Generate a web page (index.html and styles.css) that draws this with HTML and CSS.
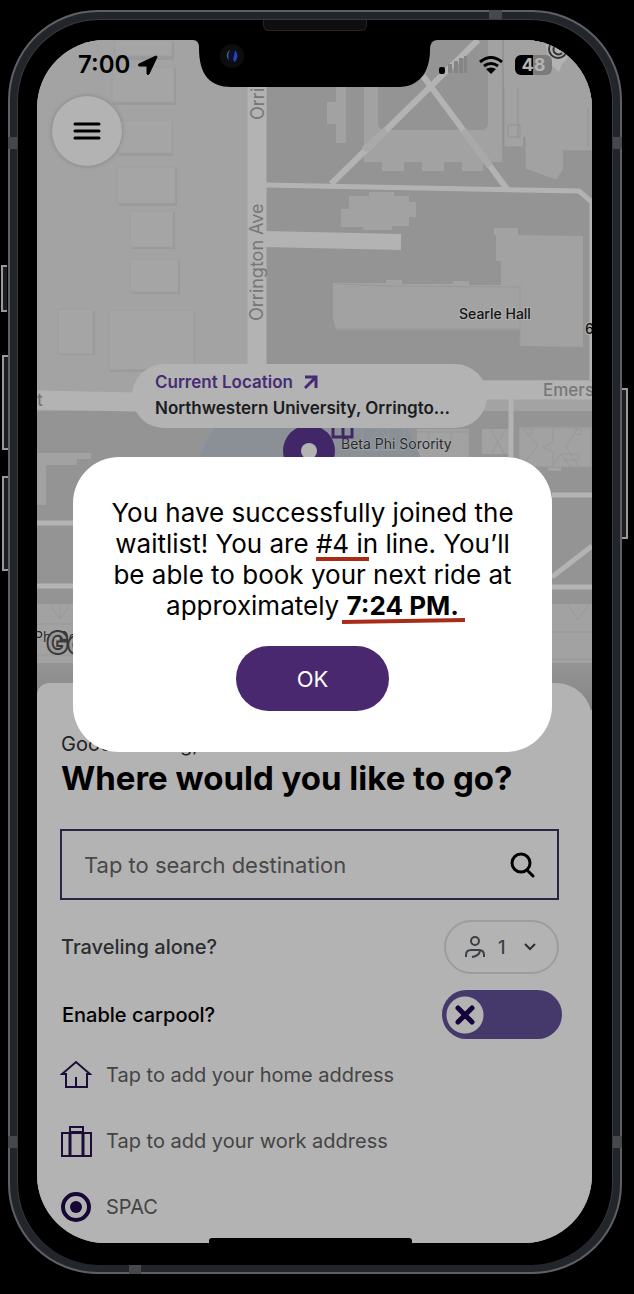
FILE: index.html
```html
<!DOCTYPE html>
<html lang="en">
<head>
<meta charset="utf-8">
<meta name="viewport" content="width=device-width, initial-scale=1">
<title>Waitlist confirmation</title>
<link rel="stylesheet" href="styles.css">
</head>
<body>
<div class="phone">
  <span class="side-key key-mute"></span>
  <span class="side-key key-up"></span>
  <span class="side-key key-down"></span>
  <span class="side-key key-power"></span>
  <span class="band band-left-top"></span>
  <span class="band band-right-top"></span>
  <span class="band band-left-bottom"></span>
  <span class="band band-right-bottom"></span>
  <span class="band band-top"></span>
  <span class="band band-bottom"></span>
  <div class="bezel">
    <span class="speaker"></span>
    <main class="screen">
      <svg class="map" viewBox="37 40 555 670" role="img" aria-label="Map around Orrington Avenue">
        <rect x="37" y="40" width="555" height="670" fill="#a3a3a3"/>
        <path d="M265 40H592V380H265ZM37 411H592V710H37Z" fill="#949494"/>
        <g fill="#9a9a9a">
          <path d="M115 42h59v18h-59zM113 68h63v37h-63zM119 121h54v35h-54zM119 168h58v38h-58zM132 212h43v37h-43zM132 260h48v34h-48zM59 311h36v44h-36zM110 312h85v60h-85z"/>
        </g>
        <g fill="#a5a5a5" stroke="#9e9e9e">
          <path d="M114 40h58v16h-58zM112 67h62v35h-62zM118 120h54v33h-54zM117 167h58v36h-58zM130 211h43v36h-43zM130 259h48v33h-48zM58 309h35v45h-35zM109 310h85v59l-85 1z"/>
        </g>
        <g fill="#a2a2a2">
          <path d="M347 87h17v75h18v9h22v-9h18v9h22v-9h18v9h21v-9h19V40H347zM346 87v56h-10v-19h-9v-22h9V87zM504 40h19v107h-19z"/>
          <path d="M518 40h74v111h-29v18l-7 11-31-11v-32h-7v-30h5V88h-5z"/>
          <path d="M349 196h20v-4h25v4h15v6h7v15h-7v9h-17v4h-29v-3h-22v-18h8z"/>
          <path d="M333 283h53v-3h16v4h51v-3h16v4h32v-24h-5v-26h-2v-7h24v7l65 1v111l-63-1v-16H336l-3-12z"/>
          <path d="M37 453h54v6H77v6H46v40H37z"/>
          <path d="M417 429h52v28h-52zM482 429h30v25h-30zM519 427h73v40h-31v4h-13v-4h-29zM37 604h555v59H37z"/>
        </g>
        <path d="M504 87v60h19M518 108v30M518 88v19M558 181l-33-12V137M508 125h12v12h-12zM588 147v-39M562 151h29" fill="none" stroke="#919191"/>
        <path d="M378 40h110v83q0 7-7 7h-96q-7 0-7-7z" fill="#949494"/>
        <path d="M520 285v62M336 329h184M337 284l53 2 130 1" fill="none" stroke="#989898"/>
        <g fill="none" stroke="#b3b3b3">
          <path d="M257 40V370" stroke-width="19"/>
          <path d="M37 400l150 3M480 390h112" stroke-width="19"/>
          <path d="M265 239l136 3" stroke-width="16"/>
          <path d="M265 185l314 6 13 11V380" stroke-width="5"/>
          <path d="M511 399v58M37 523h40M37 586h40M552 495h40M552 587h40M552 577l40-31" stroke-width="5"/>
          <path d="M478 40L331 184M423 76L507 189" stroke-width="6"/>
        </g>
        <path d="M386 130l-22 20M463 130l27 36" stroke="#a9a9a9" stroke-width="7"/>
        <g fill="none" stroke="#989898">
          <path d="M417 432h52v24M429 430v14h22v-14M491 430l14 25M505 430l-14 25M519 428h72v39h-72zM523 429l15 17-15 18M553 428v14l-10 5 10 5v14M578 428l-12 18 12 20M551 467l10-13 10 13M563 454h16v6h-16M526 429h6v5h-6M575 429h6v5h-6"/>
          <path d="M37 624h38M50 605l10 14 10-14M60 604v15M37 640h38M37 655h38M552 632h40M568 605l10 15 10-15M552 659h40"/>
        </g>
        <circle cx="310" cy="494" r="116" fill="#8b9096"/>
        <circle cx="310" cy="494" r="116" fill="none" stroke="#8493aa"/>
        <path d="M350 428h54v22h-54zM362 428v20M388 428v20M370 440l10-12 8 12" fill="none" stroke="#9299a2"/>
        <g class="street">
          <text class="avenue" transform="translate(263 321) rotate(-90)">Orrington Ave</text>
          <text class="avenue" transform="translate(264 120) rotate(-90)">Orrington Ave</text>
          <text x="543" y="396">Emerson St</text>
          <text x="37" y="406">t</text>
        </g>
        <g class="place">
          <text x="459" y="319">Searle Hall</text>
          <text x="585" y="334">600</text>
          <text x="341" y="449" class="soft">Beta Phi Sorority</text>
          <text x="34" y="642" class="soft">Phi De</text>
        </g>
        <g class="google">
          <text x="47" y="653">Google</text>
        </g>
        <path d="M545 40h28l-7 14 3 3-7 7-3 8-10-9z" fill="#b3b3b3"/>
        <circle cx="558" cy="49" r="9" fill="none" stroke="#333" stroke-width="2"/>
        <path d="M562 46a5 5 0 1 0 0 7" fill="none" stroke="#333" stroke-width="2"/>
        <path d="M333 427v10h19v-10M343 427v10" fill="none" stroke="#412767" stroke-width="3"/>
        <circle cx="309" cy="451" r="26" fill="#412767"/>
        <circle cx="309" cy="451" r="8" fill="#b3b3b3"/>
        <defs>
          <linearGradient id="fade" x1="0" y1="0" x2="0" y2="1">
            <stop offset="0" stop-color="#949494"/>
            <stop offset="1" stop-color="#858585"/>
          </linearGradient>
        </defs>
        <rect x="37" y="665" width="555" height="45" fill="url(#fade)"/>
      </svg>

      <header class="status">
        <span class="clock">7:00
          <svg width="20" height="20" viewBox="0 0 20 20" aria-hidden="true"><path d="M18 1L1 9q-1 1 0 2h8v8q1 1 2 0L19 2q0-1-1-1z" fill="#000" stroke="#000"/></svg>
        </span>
        <span class="indicators">
          <svg width="28" height="18" viewBox="0 0 28 18" aria-hidden="true"><rect y="11" width="6" height="7" rx="2"/><path d="M9 8h4v9H9zM15 5h4v12h-4zM20 2h4v15h-4zM25 0h3v17h-3z" fill="#858585"/></svg>
          <svg width="26" height="18" viewBox="0 0 26 18" aria-hidden="true"><path d="M2 6Q13-3 24 6M6 10q7-5 14 0" fill="none" stroke="#000" stroke-width="3"/><path d="M8 13q5-3 10 0l-5 5z"/></svg>
          <span class="battery">48</span>
        </span>
      </header>

      <svg class="notch" width="244" height="47" viewBox="193 40 244 47" aria-hidden="true">
        <path d="M193 40q6 0 6 8c0 28 12 39 32 39h168c20 0 31-15 31-37q0-10 7-10z"/>
        <circle cx="232" cy="56" r="12" fill="#0d0d0f"/>
        <circle cx="232" cy="56" r="6" fill="#0b1030"/>
        <path d="M230 50a6 6 0 0 0-1 10q-2-5 1-10z" fill="#3b6f70"/>
        <path d="M235 50q5 6 0 12-3-2-1-6z" fill="#2546a5"/>
      </svg>

      <button class="menu" type="button" aria-label="Menu">
        <svg width="28" height="20" viewBox="0 0 28 20" aria-hidden="true"><path d="M2 3h24M2 10h24M2 17h24" stroke="#000" stroke-width="3" stroke-linecap="round"/></svg>
      </button>

      <a class="location" href="#location">
        <span class="location-label">Current Location
          <svg width="16" height="16" viewBox="0 0 16 16" aria-hidden="true"><path d="M2 3h11v11M13 3L2 14" fill="none" stroke="#472b75" stroke-width="3"/></svg>
        </span>
        <span class="location-name">Northwestern University, Orrington Ave</span>
      </a>

      <section class="sheet">
        <p class="greeting">Good evening,</p>
        <h1 class="title">Where would you like to go?</h1>
        <label class="search">
          <input type="search" placeholder="Tap to search destination" aria-label="Search destination">
          <svg width="26" height="26" viewBox="0 0 26 26" aria-hidden="true"><circle cx="12" cy="11" r="9" fill="none" stroke="#000" stroke-width="3"/><path d="M18 18l6 6" stroke="#000" stroke-width="3" stroke-linecap="round"/></svg>
        </label>
        <div class="option">
          <label class="option-label muted" for="riders">Traveling alone?</label>
          <span class="riders">
            <svg width="22" height="22" viewBox="0 0 22 22" aria-hidden="true"><g fill="none" stroke="#3c3f44" stroke-width="2"><circle cx="11" cy="5" r="4"/><path d="M2 21v-2q0-5 5-5h8q5 0 5 5v2M8 21q7-1 8-6"/></g></svg>
            <select id="riders"><option>1</option><option>2</option><option>3</option></select>
            <svg width="14" height="10" viewBox="0 0 14 10" aria-hidden="true"><path d="M2 2l5 5 5-5" fill="none" stroke="#2d3035" stroke-width="2"/></svg>
          </span>
        </div>
        <div class="option carpool">
          <label class="option-label" for="carpool">Enable carpool?</label>
          <span class="toggle">
            <input type="checkbox" id="carpool">
            <svg width="20" height="20" viewBox="0 0 20 20" aria-hidden="true"><path d="M3 3l14 14M17 3L3 17" stroke="#16033c" stroke-width="5" stroke-linecap="round"/></svg>
          </span>
        </div>
        <ul class="places">
          <li><a href="#home">
            <svg width="32" height="32" viewBox="0 0 32 32" aria-hidden="true"><path d="M2 15h4v13h21V15h3L16 3zM16 28V18" fill="none" stroke="#1c0d38" stroke-width="2"/></svg>
            Tap to add your home address</a></li>
          <li><a href="#work">
            <svg width="32" height="32" viewBox="0 0 32 32" aria-hidden="true"><path d="M2 8h29v23H2zM10 31V2h13v29M10 7h13" fill="none" stroke="#1c0d38" stroke-width="2"/><path d="M10 8v23M23 8v23" stroke="#1c0d38" stroke-width="3"/></svg>
            Tap to add your work address</a></li>
          <li><a href="#spac">
            <svg width="32" height="32" viewBox="0 0 32 32" aria-hidden="true"><circle cx="16" cy="16" r="13" fill="none" stroke="#170735" stroke-width="4"/><circle cx="16" cy="16" r="6" fill="#170735"/></svg>
            SPAC</a></li>
        </ul>
      </section>
      <span class="home-bar"></span>

      <div class="overlay">
        <div class="dialog" role="dialog" aria-modal="true" aria-labelledby="message">
          <p class="message" id="message">You have successfully joined the waitlist! You are <span class="mark place-mark">#4</span> in line. You’ll be able to book your next ride at approximately <strong class="mark time-mark">7:24 PM.</strong></p>
          <button class="ok" type="button">OK</button>
        </div>
      </div>
    </main>
  </div>
</div>
</body>
</html>
```
FILE: styles.css
```css
* { box-sizing: border-box; }

body {
  margin: 0;
  background: #000;
  color: #000;
  font-family: Inter, "Liberation Sans", sans-serif;
}

button, input, select { font: inherit; color: inherit; }
svg { display: block; flex: none; }

/* Phone body */
.phone {
  position: relative;
  margin: 10px 12px 19px 8px;
  padding: 7px;
  border: 2px solid #5e6065;
  border-radius: 90px;
  background: #22252a;
}

.bezel {
  position: relative;
  padding: 20px 20px 22px 19px;
  border: 1px solid #3a3b3e;
  border-bottom-width: 0;
  border-radius: 82px;
  background: #000;
}

.side-key {
  position: absolute;
  left: -8px;
  width: 6px;
  border: 2px solid #9a9a9a;
  border-right: 0;
  background: #1c1e22;
}
.key-mute { top: 253px; height: 47px; left: -9px; }
.key-up { top: 343px; height: 95px; }
.key-down { top: 464px; height: 95px; }
.key-power {
  top: 376px;
  left: auto;
  right: -8px;
  height: 151px;
  border: 2px solid #9a9a9a;
  border-left: 0;
}

.band { position: absolute; width: 9px; height: 12px; background: #46484c; }
.band-left-top { left: -2px; top: 125px; }
.band-right-top { right: -2px; top: 125px; }
.band-left-bottom { left: -2px; bottom: 124px; }
.band-right-bottom { right: -2px; bottom: 124px; }
.band-top { top: -2px; right: 118px; width: 13px; height: 9px; }
.band-bottom { bottom: -2px; left: 119px; width: 12px; height: 10px; }

.speaker {
  position: absolute;
  top: 0;
  left: 50%;
  width: 104px;
  height: 11px;
  margin-left: -52px;
  border: 1px solid #242424;
  border-top: 0;
  border-radius: 0 0 6px 6px;
  background: #0e0e0e;
}

.screen {
  position: relative;
  overflow: hidden;
  border-radius: 68px;
  background: #b3b3b3;
}

/* Map */
.map { width: 100%; height: auto; }
.street { font-size: 17px; font-weight: 500; fill: #777; }
.avenue { font-size: 18px; font-weight: 400; }
.place {
  font-size: 14px;
  font-weight: 500;
  fill: #151515;
  stroke: #b0b0b0;
  stroke-width: 2px;
  paint-order: stroke;
}
.place .soft { fill: #27292c; font-weight: 400; stroke-width: 1px; }
.google {
  font-size: 28px;
  font-weight: 500;
  fill: #999;
  stroke: #383838;
  stroke-width: 4px;
  paint-order: stroke;
}

/* Status bar */
.status {
  position: absolute;
  inset: 0 0 auto;
  display: flex;
  justify-content: space-between;
  padding: 11px 40px 0 41px;
}
.clock {
  display: flex;
  align-items: center;
  gap: 8px;
  font-size: 24px;
  line-height: 28px;
  font-weight: 600;
}
.indicators { display: flex; align-items: center; gap: 11px; }
.battery {
  width: 37px;
  border-radius: 6px;
  background: linear-gradient(90deg, #000 50%, #7b7b7b 50%);
  color: #b5b5b5;
  font-size: 18px;
  line-height: 20px;
  font-weight: 700;
  text-align: center;
}
.notch { position: absolute; top: 0; left: 50%; margin-left: -122px; }

.menu {
  position: absolute;
  top: 56px;
  left: 15px;
  display: grid;
  place-items: center;
  width: 70px;
  height: 70px;
  padding: 0;
  border: 0;
  border-radius: 50%;
  background: #b3b3b3;
  box-shadow: 0 0 5px #0003;
}

.location {
  position: absolute;
  top: 324px;
  left: 95px;
  right: 105px;
  padding: 5px 30px 7px 23px;
  border-radius: 32px;
  background: #b3b3b3;
  font-size: 17px;
  line-height: 26px;
  font-weight: 600;
  text-decoration: none;
}
.location-label { display: flex; align-items: center; gap: 10px; color: #472b75; }
.location-name {
  display: block;
  overflow: hidden;
  color: #1b1d20;
  text-overflow: ellipsis;
  white-space: nowrap;
}

/* Booking sheet */
.sheet {
  position: relative;
  margin-top: -27px;
  padding: 49px 33px 3px 24px;
  border-radius: 12px 36px 0 0;
  background: #b3b3b3;
}
.greeting { margin: 0; font-size: 20px; line-height: 24px; color: #222; }
.title { margin: 2px 0 31px; font-size: 33px; line-height: 40px; font-weight: 700; }

.search {
  display: flex;
  align-items: center;
  height: 71px;
  margin-left: -1px;
  padding: 0 22px;
  border: 2px solid #2b2342;
}
.search input {
  flex: 1;
  min-width: 0;
  padding: 0;
  border: 0;
  outline: 0;
  background: none;
  font-size: 22px;
}
.search input::placeholder { color: #484848; opacity: 1; }

.option {
  display: flex;
  align-items: center;
  justify-content: space-between;
  margin-top: 20px;
}
.option-label { font-size: 20px; line-height: 24px; font-weight: 500; }
.muted { color: #2b2d30; }
.carpool { margin: 16px -3px 0 1px; }

.riders {
  display: flex;
  align-items: center;
  gap: 12px;
  height: 54px;
  padding: 0 20px 0 18px;
  border: 2px solid #9d9d9d;
  border-radius: 27px;
}
.riders select {
  width: 13px;
  padding: 0;
  border: 0;
  appearance: none;
  background: none;
  color: #3c3f44;
  font-size: 18px;
  font-weight: 500;
}

.toggle { position: relative; display: flex; }
.toggle input {
  width: 120px;
  height: 49px;
  margin: 0;
  appearance: none;
  border-radius: 25px;
  background: radial-gradient(circle at 23px 25px, #b3b3b3 18px, #45396b 19px);
}
.toggle svg { position: absolute; top: 15px; left: 13px; pointer-events: none; }

.places { margin: 3px 0 0 -1px; padding: 0; list-style: none; }
.places a {
  display: flex;
  align-items: center;
  gap: 14px;
  height: 66px;
  color: #444;
  font-size: 20px;
  text-decoration: none;
}

.home-bar {
  position: absolute;
  bottom: 0;
  left: 50%;
  width: 203px;
  height: 5px;
  margin-left: -106px;
  border-radius: 3px 3px 0 0;
  background: #000;
}

/* Confirmation dialog */
.overlay { position: absolute; inset: 0; padding: 417px 40px 0 36px; }
.dialog {
  display: flex;
  flex-direction: column;
  align-items: center;
  gap: 25px;
  padding: 40px 36px 41px;
  border-radius: 46px;
  background: #fff;
}
.message { margin: 0; font-size: 26px; line-height: 31px; text-align: center; }
.mark { position: relative; }
.mark::after {
  content: "";
  position: absolute;
  height: 4px;
  background: #a82c18;
}
.place-mark::after { left: 0; right: -20px; bottom: -2px; }
.time-mark::after { left: -5px; right: -6px; bottom: -2px; transform: rotate(-1deg); }
.ok {
  width: 153px;
  height: 65px;
  padding: 0;
  border: 0;
  border-radius: 33px;
  background: #4a2870;
  color: #fff;
  font-size: 22px;
}
```
